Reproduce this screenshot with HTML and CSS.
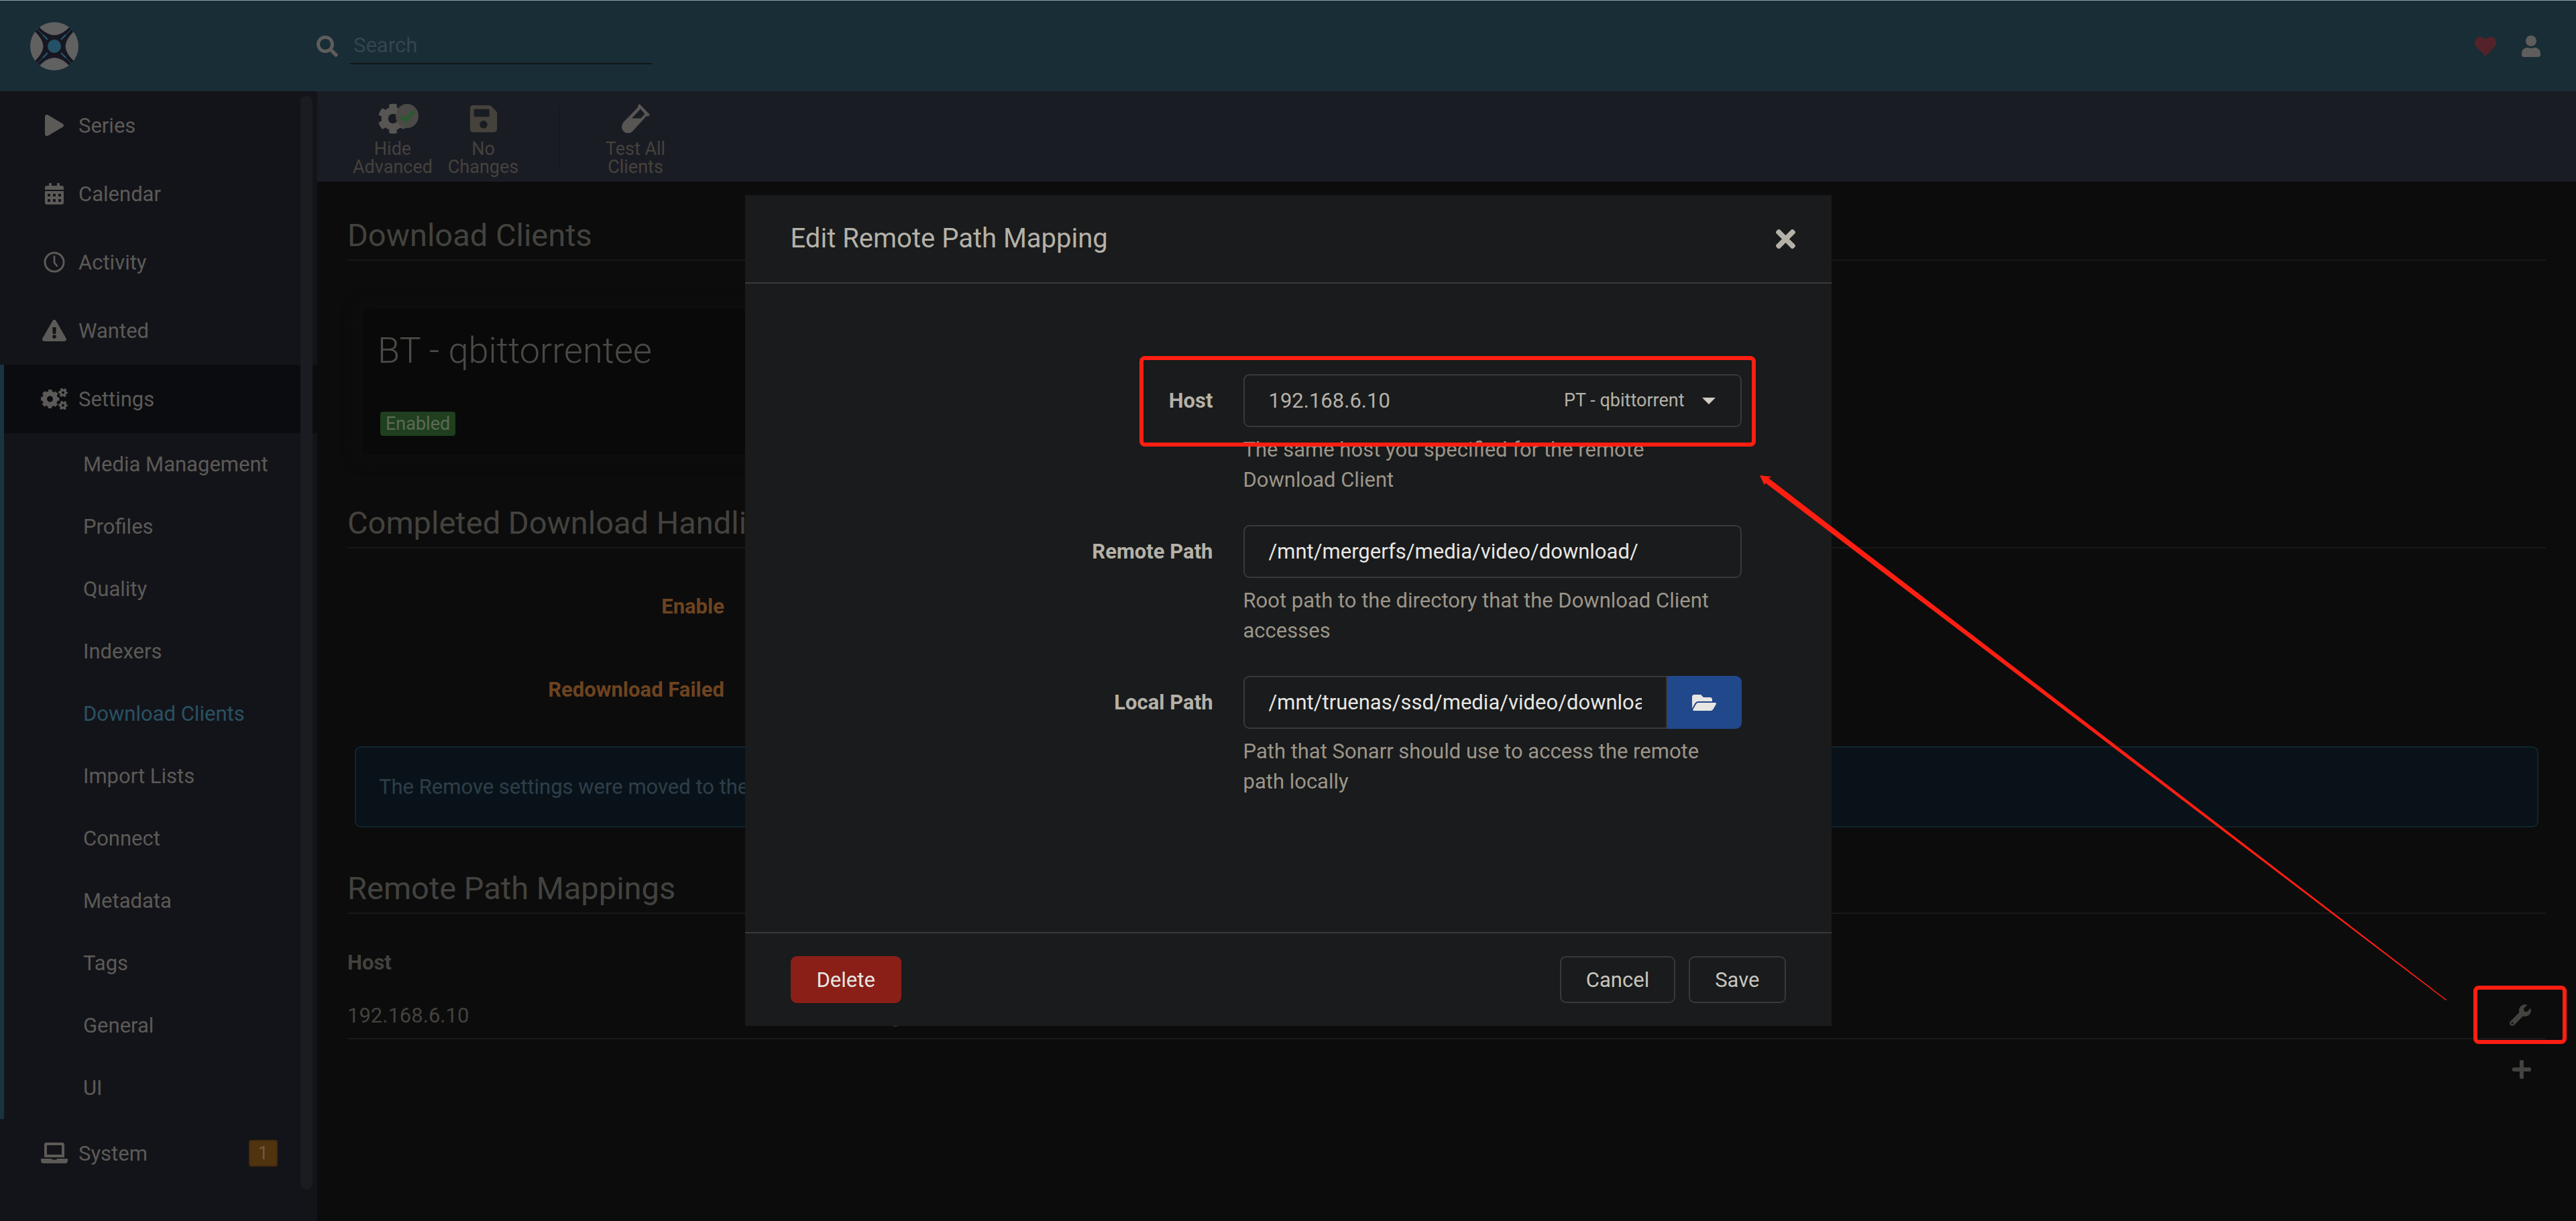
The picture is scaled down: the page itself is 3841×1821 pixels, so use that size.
FILE: index.html
```html
<!DOCTYPE html>
<html lang="en">
<head>
<meta charset="utf-8">
<title>Download Clients Settings - Sonarr</title>
<link rel="stylesheet" href="styles.css">
</head>
<body>
<svg class="sprite" aria-hidden="true">
  <symbol id="i-search" viewBox="0 0 512 512"><path d="M505 442.7L405.3 343c-4.5-4.5-10.6-7-17-7H372c27.6-35.3 44-79.7 44-128C416 93.1 322.9 0 208 0S0 93.1 0 208s93.1 208 208 208c48.3 0 92.7-16.4 128-44v16.3c0 6.4 2.5 12.5 7 17l99.7 99.7c9.4 9.4 24.6 9.4 33.9 0l28.3-28.3c9.4-9.4 9.4-24.6.1-34zM208 336c-70.7 0-128-57.2-128-128 0-70.7 57.2-128 128-128 70.7 0 128 57.2 128 128 0 70.7-57.2 128-128 128z"/></symbol>
  <symbol id="i-heart" viewBox="0 0 512 512"><path d="M462.3 62.6C407.5 15.9 326 24.3 275.7 76.2L256 96.5l-19.7-20.3C186.1 24.3 104.5 15.9 49.7 62.6c-62.8 53.6-66.1 149.8-9.9 207.9l193.5 199.8c12.5 12.9 32.8 12.9 45.3 0l193.5-199.8c56.3-58.1 53-154.3-9.8-207.9z"/></symbol>
  <symbol id="i-user" viewBox="0 0 448 512"><path d="M224 256c70.7 0 128-57.3 128-128S294.7 0 224 0 96 57.3 96 128s57.3 128 128 128zm89.6 32h-16.7c-22.2 10.2-46.9 16-72.9 16s-50.6-5.8-72.9-16h-16.7C60.2 288 0 348.2 0 422.4V464c0 26.5 21.5 48 48 48h352c26.5 0 48-21.5 48-48v-41.6c0-74.2-60.2-134.4-134.4-134.4z"/></symbol>
  <symbol id="i-play" viewBox="0 0 448 512"><path d="M424.4 214.7L72.4 6.6C43.8-10.3 0 6.1 0 47.9V464c0 37.5 40.7 60.1 72.4 41.3l352-208c31.4-18.5 31.5-64.1 0-82.6z"/></symbol>
  <symbol id="i-calendar" viewBox="0 0 448 512"><path fill-rule="evenodd" d="M48 64h48V12q0-12 12-12h40q12 0 12 12v52h128V12q0-12 12-12h40q12 0 12 12v52h48q48 0 48 48v48H0v-48q0-48 48-48zM0 192h448v272q0 48-48 48H48q-48 0-48-48zM64 256v64h64v-64zM192 256v64h64v-64zM320 256v64h64v-64zM64 384v64h64v-64zM192 384v64h64v-64zM320 384v64h64v-64z"/></symbol>
  <symbol id="i-clock" viewBox="0 0 512 512"><circle cx="256" cy="256" r="224" fill="none" stroke="currentColor" stroke-width="48"/><path d="M256 116v152l62 76" fill="none" stroke="currentColor" stroke-width="44" stroke-linecap="round" stroke-linejoin="round"/></symbol>
  <symbol id="i-warning" viewBox="0 0 576 512"><path d="M569.517 440.013C587.975 472.007 564.806 512 527.94 512H48.054c-36.937 0-59.999-40.055-41.577-71.987L246.423 23.985c18.467-32.009 64.72-31.951 83.154 0l239.94 416.028zM288 354c-25.405 0-46 20.595-46 46s20.595 46 46 46 46-20.595 46-46-20.595-46-46-46zm-43.673-165.346l7.418 136c.347 6.364 5.609 11.346 11.982 11.346h48.546c6.373 0 11.635-4.982 11.982-11.346l7.418-136c.375-6.874-5.098-12.654-11.982-12.654h-63.383c-6.884 0-12.356 5.78-11.981 12.654z"/></symbol>
  <symbol id="i-cog" viewBox="0 0 512 512"><path d="M487.4 315.7l-42.6-24.6c4.3-23.2 4.3-47 0-70.2l42.6-24.6c4.9-2.8 7.1-8.6 5.5-14-11.1-35.6-30-67.8-54.7-94.6-3.8-4.1-10-5.1-14.8-2.3L380.8 110c-17.9-15.4-38.5-27.3-60.8-35.1V25.8c0-5.6-3.9-10.5-9.4-11.7-36.7-8.2-74.3-7.8-109.2 0-5.5 1.2-9.4 6.1-9.4 11.7V75c-22.2 7.9-42.8 19.8-60.8 35.1L88.7 85.5c-4.9-2.8-11-1.9-14.8 2.3-24.7 26.7-43.6 58.9-54.7 94.6-1.7 5.4.6 11.2 5.5 14L67.3 221c-4.3 23.2-4.3 47 0 70.2l-42.6 24.6c-4.9 2.8-7.1 8.6-5.5 14 11.1 35.6 30 67.8 54.7 94.6 3.8 4.1 10 5.1 14.8 2.3l42.6-24.6c17.9 15.4 38.5 27.3 60.8 35.1v49.2c0 5.6 3.9 10.5 9.4 11.7 36.7 8.2 74.3 7.8 109.2 0 5.5-1.2 9.4-6.1 9.4-11.7v-49.2c22.2-7.9 42.8-19.8 60.8-35.1l42.6 24.6c4.9 2.8 11 1.9 14.8-2.3 24.7-26.7 43.6-58.9 54.7-94.6 1.5-5.5-.7-11.3-5.6-14.1zM256 336c-44.1 0-80-35.9-80-80s35.9-80 80-80 80 35.9 80 80-35.9 80-80 80z"/></symbol>
  <symbol id="i-cogs" viewBox="0 0 40 32">
    <g fill="none" stroke="currentColor">
      <circle cx="13.500" cy="16" r="8" stroke-width="7"/>
      <circle cx="13.500" cy="16" r="12" stroke-width="4" stroke-dasharray="5.400 4.025" stroke-dashoffset="2.700"/>
      <circle cx="33" cy="6.500" r="3.600" stroke-width="3.200"/>
      <circle cx="33" cy="6.500" r="5.600" stroke-width="2.400" stroke-dasharray="3.500 2.364" stroke-dashoffset="1.750"/>
      <circle cx="33" cy="25.500" r="3.600" stroke-width="3.200"/>
      <circle cx="33" cy="25.500" r="5.600" stroke-width="2.400" stroke-dasharray="3.500 2.364" stroke-dashoffset="1.750"/>
    </g>
  </symbol>
  <symbol id="i-laptop" viewBox="0 0 640 512"><path fill-rule="evenodd" d="M128 0h384q48 0 48 48v304H80V48q0-48 48-48zM144 64v224h352V64zM8 384h248q6 24 24 24h80q18 0 24-24h248q8 0 8 8v40q0 64-64 64H64Q0 496 0 432v-40q0-8 8-8z"/></symbol>
  <symbol id="i-save" viewBox="0 0 448 512"><path d="M433.941 129.941l-83.882-83.882A48 48 0 0 0 316.118 32H48C21.49 32 0 53.49 0 80v352c0 26.51 21.49 48 48 48h352c26.51 0 48-21.49 48-48V163.882a48 48 0 0 0-14.059-33.941zM224 416c-35.346 0-64-28.654-64-64 0-35.346 28.654-64 64-64s64 28.654 64 64c0 35.346-28.654 64-64 64zm96-304.520V212c0 6.627-5.373 12-12 12H76c-6.627 0-12-5.373-12-12V108c0-6.627 5.373-12 12-12h228.520c3.183 0 6.235 1.264 8.485 3.515l3.480 3.480A11.996 11.996 0 0 1 320 111.480z"/></symbol>
  <symbol id="i-vial" viewBox="0 0 44 46"><path fill-rule="evenodd" d="M27.500 1L43 17l-3 3.200-1.600-1.600L17.500 41.500a9.500 9.500 0 0 1-14-13L25.700 5.500 24.500 4.300zM29 8.500L16 22.500h13.500L35.500 16z"/></symbol>
  <symbol id="i-times" viewBox="0 80 352 352"><path d="M242.720 256l100.070-100.070c12.280-12.280 12.280-32.190 0-44.480l-22.240-22.240c-12.280-12.280-32.190-12.280-44.480 0L176 189.280 75.930 89.210c-12.280-12.280-32.190-12.280-44.480 0L9.210 111.450c-12.280 12.280-12.280 32.190 0 44.480L109.280 256 9.210 356.070c-12.280 12.280-12.280 32.190 0 44.480l22.240 22.240c12.280 12.280 32.200 12.280 44.480 0L176 322.720l100.070 100.070c12.280 12.280 32.200 12.280 44.480 0l22.240-22.240c12.280-12.280 12.280-32.190 0-44.480L242.720 256z"/></symbol>
  <symbol id="i-plus" viewBox="0 0 448 512"><path d="M416 208H272V64c0-17.670-14.330-32-32-32h-32c-17.670 0-32 14.330-32 32v144H32c-17.670 0-32 14.330-32 32v32c0 17.670 14.330 32 32 32h144v144c0 17.670 14.330 32 32 32h32c17.670 0 32-14.330 32-32V304h144c17.670 0 32-14.330 32-32v-32c0-17.670-14.330-32-32-32z"/></symbol>
  <symbol id="i-wrench" viewBox="0 0 512 512"><path d="M507.730 109.100c-2.240-9.030-13.540-12.090-20.120-5.510l-74.360 74.360-67.880-11.310-11.310-67.880 74.360-74.360c6.620-6.620 3.430-17.900-5.660-20.160-47.380-11.740-99.550.91-136.580 37.930-39.640 39.640-50.550 97.100-34.050 147.200L18.740 402.760c-24.990 24.990-24.990 65.510 0 90.500 24.990 24.990 65.510 24.990 90.500 0l213.210-213.210c50.120 16.710 107.470 5.680 147.370-34.220 37.070-37.070 49.700-89.320 37.910-136.730zM64 472c-13.250 0-24-10.750-24-24 0-13.260 10.750-24 24-24s24 10.740 24 24c0 13.250-10.750 24-24 24z"/></symbol>
  <symbol id="i-folder" viewBox="0 0 576 512"><path d="M572.694 292.093L500.270 416.248A63.997 63.997 0 0 1 444.989 448H45.025c-18.523 0-30.064-20.093-20.731-36.093l72.424-124.155A64 64 0 0 1 152 256h399.964c18.523 0 30.064 20.093 20.730 36.093zM152 224h328v-48c0-26.510-21.490-48-48-48H272l-64-64H48C21.490 64 0 85.490 0 112v278.046l69.077-118.418C86.214 242.250 117.989 224 152 224z"/></symbol>
</svg>

<header class="topbar">
  <a class="logo" href="#" aria-label="Sonarr">
    <svg viewBox="0 0 72 72">
      <defs><clipPath id="disc"><circle cx="36" cy="36" r="36"/></clipPath></defs>
      <g clip-path="url(#disc)">
        <rect width="72" height="72" fill="#616161"/>
        <path fill="#161721" d="M13 7Q24 19 36 19.500 48 19 59 7L66 13Q53 25 52.500 36 53 47 66 59L59 66Q48 53.500 36 53 24 53.500 13 66L6 59Q19 47 19.500 36 19 25 6 13z"/>
        <g stroke="#265a72" fill="none">
          <path stroke-width="1" d="M10 10l15 15M62 10L47 25M10 62l15-15M62 62L47 47"/>
          <path stroke-width="2" d="M19 19l7 7M53 19l-7 7M19 53l7-7M53 53l-7-7"/>
        </g>
        <circle cx="36" cy="36" r="10" fill="#245167"/>
      </g>
    </svg>
  </a>
  <label class="search">
    <svg class="icon-md"><use href="#i-search"/></svg>
    <input type="text" placeholder="Search" aria-label="Search">
  </label>
  <div class="top-actions">
    <a class="donate" href="#" aria-label="Donate"><svg class="icon-md"><use href="#i-heart"/></svg></a>
    <a href="#" aria-label="Account"><svg class="icon-md"><use href="#i-user"/></svg></a>
  </div>
</header>

<div class="shell">
  <nav class="sidebar">
    <a class="nav-item" href="#"><svg><use href="#i-play"/></svg>Series</a>
    <a class="nav-item" href="#"><svg><use href="#i-calendar"/></svg>Calendar</a>
    <a class="nav-item" href="#"><svg><use href="#i-clock"/></svg>Activity</a>
    <a class="nav-item" href="#"><svg><use href="#i-warning"/></svg>Wanted</a>
    <div class="nav-group">
      <a class="nav-item active" href="#"><svg><use href="#i-cogs"/></svg>Settings</a>
      <a class="nav-child" href="#">Media Management</a>
      <a class="nav-child" href="#">Profiles</a>
      <a class="nav-child" href="#">Quality</a>
      <a class="nav-child" href="#">Indexers</a>
      <a class="nav-child current" href="#">Download Clients</a>
      <a class="nav-child" href="#">Import Lists</a>
      <a class="nav-child" href="#">Connect</a>
      <a class="nav-child" href="#">Metadata</a>
      <a class="nav-child" href="#">Tags</a>
      <a class="nav-child" href="#">General</a>
      <a class="nav-child" href="#">UI</a>
    </div>
    <a class="nav-item" href="#"><svg><use href="#i-laptop"/></svg>System<span class="count">1</span></a>
    <span class="scroll-thumb"></span>
  </nav>

  <div class="page">
    <div class="toolbar">
      <button class="tool" type="button">
        <span class="tool-icon bright"><svg><use href="#i-cog"/></svg>
          <svg class="tick" viewBox="0 0 34 36"><ellipse cx="17" cy="18" rx="17" ry="18" fill="#4b4a46"/><path d="M8 18l7 7L27 11" fill="none" stroke="#295a2e" stroke-width="5"/></svg>
        </span>
        Hide<br>Advanced
      </button>
      <button class="tool" type="button">
        <span class="tool-icon"><svg><use href="#i-save"/></svg></span>
        No<br>Changes
      </button>
      <span class="tool-sep"></span>
      <button class="tool" type="button">
        <span class="tool-icon bright"><svg><use href="#i-vial"/></svg></span>
        Test All<br>Clients
      </button>
    </div>

    <main class="content">
      <section class="block">
        <h2>Download Clients</h2>
        <article class="client">
          <h3>BT - qbittorrentee</h3>
          <span class="enabled">Enabled</span>
        </article>
      </section>

      <section class="block">
        <h2>Completed Download Handling</h2>
        <div class="options">
          <div class="option">Enable</div>
          <div class="option">Redownload Failed</div>
        </div>
        <p class="alert">The Remove settings were moved to the individual Download Client settings in the table above.</p>
      </section>

      <section class="block">
        <h2>Remote Path Mappings</h2>
        <table class="mappings">
          <thead>
            <tr><th>Host</th><th>Remote Path</th><th>Local Path</th><th></th></tr>
          </thead>
          <tbody>
            <tr>
              <td>192.168.6.10</td>
              <td>/mnt/mergerfs/media/video/download/</td>
              <td>/mnt/truenas/ssd/media/video/download/</td>
              <td class="edit"><button class="icon-button marked" type="button" aria-label="Edit mapping"><svg class="icon-md"><use href="#i-wrench"/></svg></button></td>
            </tr>
          </tbody>
        </table>
        <div class="add"><button class="icon-button" type="button" aria-label="Add mapping"><svg class="icon-md"><use href="#i-plus"/></svg></button></div>
      </section>
    </main>
  </div>
</div>

<div class="backdrop">
  <form class="modal" role="dialog" aria-labelledby="modal-title">
    <header class="modal-header">
      <h1 id="modal-title">Edit Remote Path Mapping</h1>
      <button class="icon-button" type="button" aria-label="Close"><svg class="icon-sm"><use href="#i-times"/></svg></button>
    </header>
    <div class="modal-body">
      <div class="row marked">
        <label for="host">Host</label>
        <div class="field">
          <div class="select">
            <select id="host"><option>192.168.6.10</option></select>
            <span class="hint">PT - qbittorrent</span>
          </div>
          <p>The same host you specified for the remote Download Client</p>
        </div>
      </div>
      <div class="row">
        <label for="remote">Remote Path</label>
        <div class="field">
          <input id="remote" type="text" value="/mnt/mergerfs/media/video/download/">
          <p>Root path to the directory that the Download Client accesses</p>
        </div>
      </div>
      <div class="row">
        <label for="local">Local Path</label>
        <div class="field">
          <div class="browse">
            <input id="local" type="text" value="/mnt/truenas/ssd/media/video/download/">
            <button type="button" aria-label="Browse"><svg><use href="#i-folder"/></svg></button>
          </div>
          <p>Path that Sonarr should use to access the remote path locally</p>
        </div>
      </div>
    </div>
    <footer class="modal-footer">
      <button class="btn danger" type="button">Delete</button>
      <button class="btn" type="button">Cancel</button>
      <button class="btn" type="button">Save</button>
    </footer>
  </form>
</div>

<svg class="arrow" aria-hidden="true" viewBox="0 0 1024 783"><path d="M0 0l18 2-5 2L1024 782l-1 1L8 11l-1 4z"/></svg>
</body>
</html>
```

FILE: styles.css
```css
:root {
  --text: #5c5a57;
  --muted: #43423e;
  --line: #191919;
  --field-line: #38393b;
  --mark: #ff1f12;
}

* { box-sizing: border-box; }

body {
  margin: 0;
  min-height: 100vh;
  display: flex;
  flex-direction: column;
  border-top: 1px solid #8b9ca3;
  background: #0c0c0c;
  color: var(--muted);
  font: 31px/45px Roboto, "Liberation Sans", sans-serif;
}

a { color: inherit; text-decoration: none; }

button, input, select { font: inherit; color: inherit; }

svg { display: block; fill: currentColor; }

h1, h2, h3, p { margin: 0; font-weight: 400; }

.sprite { position: absolute; width: 0; height: 0; }

.icon-md { width: 32px; height: 32px; }
.icon-sm { width: 29px; height: 29px; }

.icon-button {
  display: block;
  padding: 0;
  border: 0;
  background: none;
}

/* Top bar */
.topbar {
  display: flex;
  align-items: center;
  height: 135px;
  padding-right: 51px;
  background: #192d37;
  color: #5f5d5b;
}

.logo { flex: 0 0 472px; padding-left: 45px; }
.logo svg { width: 72px; height: 72px; }

.search { display: flex; align-items: center; gap: 18px; }

.search input {
  width: 450px;
  height: 54px;
  padding: 0 5px;
  border: 0;
  border-bottom: 2px solid #121517;
  background: none;
  outline: 0;
}

.search input::placeholder { color: #34464e; opacity: 1; }

.top-actions { display: flex; gap: 36px; margin-left: auto; }
.donate { color: #54232a; }

/* Sidebar */
.shell { flex: 1; display: flex; }

.sidebar {
  position: relative;
  flex: 0 0 473px;
  background: #131419;
  color: var(--text);
}

.nav-item {
  display: flex;
  align-items: center;
  gap: 16px;
  height: 102px;
  padding: 0 59px 0 61px;
}

.nav-item svg { width: 40px; height: 32px; }

.nav-group { box-shadow: inset 6px 0 #193440; }
.nav-item.active { background: linear-gradient(#0b0c10, #0b0c10) no-repeat 6px 0; }

.nav-child {
  display: block;
  padding: 24px 0 24px 124px;
}

.nav-child.current { color: #2a5163; }

.count {
  margin-left: auto;
  padding: 0 12px;
  border: 2px solid #46290c;
  border-radius: 4px;
  background: #50330f;
  color: #6d5c45;
  font-size: 27px;
  line-height: 36px;
}

.scroll-thumb {
  position: absolute;
  top: 7px;
  right: 7px;
  bottom: 47px;
  width: 18px;
  border-radius: 9px;
  background: #1b1c21;
}

/* Toolbar */
.page { flex: 1; min-width: 0; }

.toolbar {
  display: flex;
  align-items: flex-start;
  height: 135px;
  padding-left: 45px;
  background: #1a1c24;
}

.tool {
  width: 135px;
  padding: 18px 0 0;
  border: 0;
  background: none;
  color: #45423c;
  font-size: 27px;
  line-height: 27px;
}

.tool-icon {
  position: relative;
  display: block;
  width: 46px;
  height: 47px;
  margin: 0 auto 8px;
}

.tool-icon.bright { color: #585653; }
.tool-icon svg { width: 100%; height: 46px; }

.tool-icon .tick {
  position: absolute;
  top: 1px;
  right: -15px;
  width: 34px;
  height: 36px;
}

.tool-sep {
  height: 91px;
  margin: 22px 45px;
  border-left: 2px solid #17181e;
}

/* Settings content */
.content { padding: 45px 45px 0; }

.block h2 {
  padding-bottom: 1px;
  border-bottom: 2px solid var(--line);
  font-size: 47px;
  line-height: 70px;
}

.client {
  width: 765px;
  height: 218px;
  margin: 71px 22px 67px;
  padding: 22px 23px 0;
  border-radius: 9px;
  background: #090909;
  box-shadow: 0 0 23px 6px #0d100e;
}

.client h3 {
  margin-bottom: 45px;
  color: #4b4a47;
  font-size: 54px;
  font-weight: 300;
  line-height: 81px;
}

.enabled {
  display: inline-block;
  margin-left: 4px;
  padding: 0 8px;
  border-radius: 4px;
  background: #1f3f1e;
  color: #5b6a58;
  font-size: 27px;
  line-height: 36px;
}

.options { padding: 25px 0 22px; }

.option {
  width: 562px;
  padding: 39px 0 40px;
  color: #6d4320;
  font-weight: 700;
  text-align: right;
}

.alert {
  margin: 0 11px 56px;
  padding: 36px 34px;
  border: 2px solid #11252d;
  border-radius: 9px;
  background: #0a1219;
  color: #2d3f4a;
}

.mappings {
  width: 100%;
  margin-top: 34px;
  border-collapse: collapse;
  table-layout: fixed;
  text-align: left;
}

.mappings th, .mappings td { height: 76px; padding: 0; }
.mappings th:first-child, .mappings th:nth-child(2) { width: 675px; }
.mappings td { padding-top: 7px; border-bottom: 2px solid var(--line); }

.edit .icon-button { margin: 0 22px 0 auto; }
.add { padding: 29px 20px 0; }
.add .icon-button { margin-left: auto; }

/* Modal */
.backdrop {
  position: fixed;
  inset: 0;
  display: flex;
  align-items: center;
  justify-content: center;
}

.modal {
  display: flex;
  flex-direction: column;
  width: 1620px;
  min-height: 1239px;
  background: #191b1c;
  color: #b5b1a8;
}

.modal-header {
  display: flex;
  align-items: center;
  justify-content: space-between;
  padding: 35px 54px 35px 68px;
  border-bottom: 2px solid var(--field-line);
}

.modal-header h1 { font-size: 40px; line-height: 60px; }

.modal-body {
  flex: 1;
  display: flex;
  flex-direction: column;
  gap: 45px;
  padding: 135px 68px 67px;
}

.row {
  display: grid;
  grid-template-columns: 630px 743px;
  column-gap: 45px;
}

.row label {
  font-weight: 700;
  line-height: 79px;
  text-align: right;
}

.field p { margin-top: 11px; color: #9c9589; }

.field input, .field select {
  display: block;
  width: 100%;
  height: 79px;
  padding: 0 36px;
  border: 2px solid var(--field-line);
  border-radius: 9px;
  background: transparent;
  color: #e8e6e3;
  outline: 0;
}

.select { position: relative; }
.field select { appearance: none; color: inherit; }

.hint {
  position: absolute;
  top: 17px;
  right: 39px;
  display: flex;
  align-items: center;
  gap: 26px;
  font-size: 27px;
  pointer-events: none;
}

.hint::after {
  content: "";
  border: 10px solid transparent;
  border-top-color: #d0ccc4;
  border-bottom: 0;
}

.browse { display: flex; }
.browse input { flex: 1; min-width: 0; border-radius: 9px 0 0 9px; }

.browse button {
  display: grid;
  place-items: center;
  width: 111px;
  border: 0;
  border-radius: 0 9px 9px 0;
  background: #22488c;
  color: #e8e6e3;
}

.browse svg { width: 36px; height: 32px; }

.modal-footer {
  display: flex;
  gap: 20px;
  padding: 34px 68px;
  border-top: 2px solid var(--field-line);
}

.btn {
  height: 70px;
  padding: 0 37px;
  border: 2px solid var(--field-line);
  border-radius: 9px;
  background: transparent;
  color: #c8c5be;
}

.btn.danger {
  margin-right: auto;
  border-color: #8a1f17;
  background: #8a1f17;
  color: #e8e6e3;
}

/* Red call-outs */
.marked { position: relative; }

.marked::after {
  content: "";
  position: absolute;
  border: 6px solid var(--mark);
  border-radius: 8px;
  pointer-events: none;
}

.row.marked::after { inset: -27px 45px 72px 520px; }
.icon-button.marked::after { inset: -28px -53px -27px -54px; }

.arrow {
  position: absolute;
  top: 709px;
  left: 2624px;
  width: 1024px;
  fill: var(--mark);
}
```
